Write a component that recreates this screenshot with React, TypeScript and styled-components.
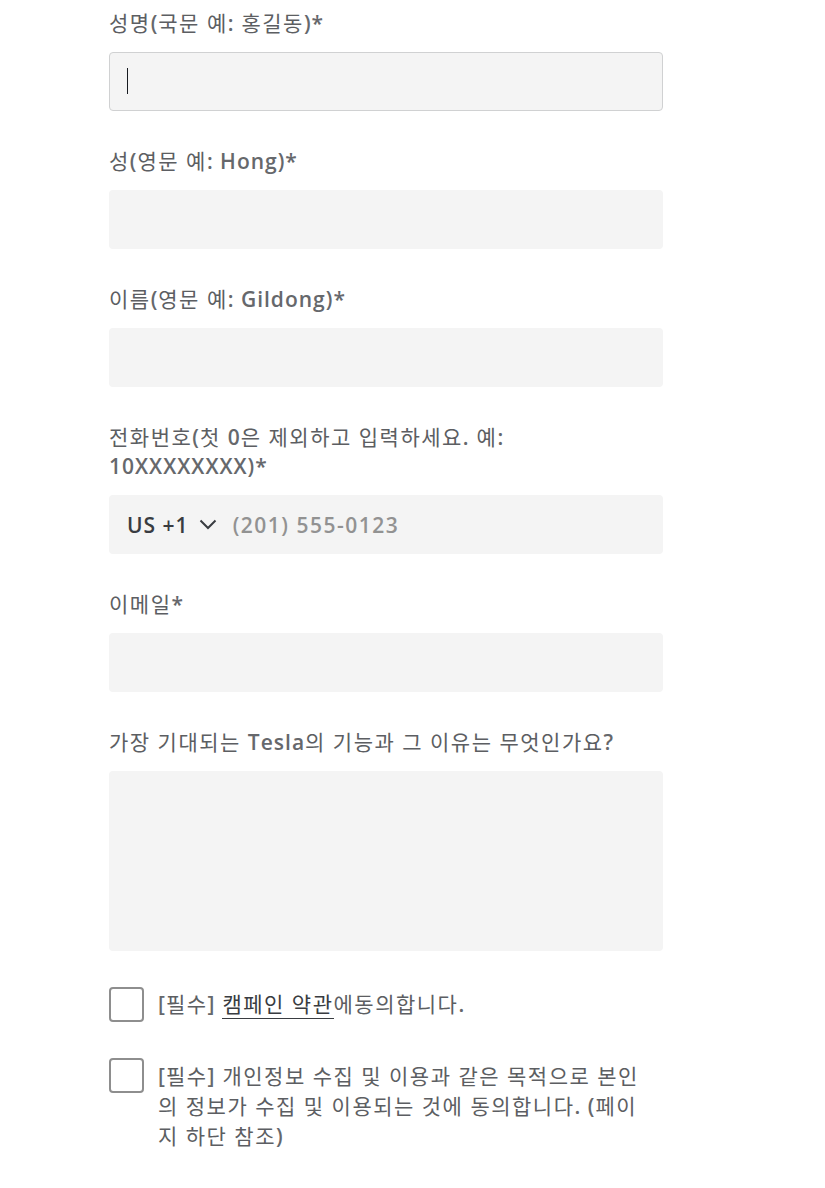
import React from 'react'
import styled, { createGlobalStyle } from 'styled-components'

const GlobalStyle = createGlobalStyle`
    body {
        margin: 0;
        background: #ffffff;
        font-family: 'Open Sans', 'Noto Sans CJK KR', sans-serif;
        color: #5c5e62;
    }
`

const Form = styled.form`
    width: 554px;
    margin-left: 109px;
    padding-top: 9px;
    display: flex;
    flex-direction: column;
`

const Field = styled.div`
    display: flex;
    flex-direction: column;
    margin-bottom: 36px;
`

const Label = styled.label`
    font-size: 21px;
    line-height: 29px;
    letter-spacing: 1.5px;
    color: #5c5e62;
    margin-bottom: 14px;
`

const Lat = styled.span`
    font-weight: 600;
    letter-spacing: 1px;
    color: #66686c;
`

const InputWrap = styled.div`
    position: relative;
`

const Input = styled.input<{ $focused?: boolean }>`
    box-sizing: border-box;
    width: 100%;
    height: 59px;
    border: 1px solid ${p => (p.$focused ? '#d0d1d2' : 'transparent')};
    border-radius: 4px;
    background: #f4f4f4;
    padding: 0 18px;
    font-family: inherit;
    font-size: 20px;
    color: #171a20;
    outline: none;
`

const Caret = styled.span`
    position: absolute;
    left: 18px;
    top: 16px;
    width: 1px;
    height: 26px;
    background: #171a20;
`

const PhoneBox = styled.div`
    box-sizing: border-box;
    height: 59px;
    border-radius: 4px;
    background: #f4f4f4;
    display: flex;
    align-items: center;
    padding: 0 18px;
    gap: 16px;
`

const CountrySelect = styled.div`
    display: flex;
    align-items: center;
    gap: 10px;
    font-size: 21px;
    font-weight: 600;
    letter-spacing: 1px;
    color: #393c41;
    white-space: nowrap;
`

const PhoneInput = styled.input`
    flex: 1;
    border: none;
    background: transparent;
    font-family: inherit;
    font-size: 21px;
    letter-spacing: 1.5px;
    color: #171a20;
    outline: none;
    padding: 0;
    &::placeholder {
        color: #929292;
        font-weight: 600;
    }
`

const TextArea = styled.textarea`
    box-sizing: border-box;
    width: 100%;
    height: 180px;
    border: none;
    border-radius: 4px;
    background: #f4f4f4;
    resize: none;
    outline: none;
    display: block;
`

const Agree = styled.label`
    display: flex;
    align-items: flex-start;
    gap: 14px;
    margin-bottom: 36px;
`

const Box = styled.span`
    box-sizing: border-box;
    flex: 0 0 35px;
    width: 35px;
    height: 35px;
    border: 2px solid #8e8e8e;
    border-radius: 4px;
    background: #fff;
`

const AgreeText = styled.span<{ $top?: number }>`
    font-size: 21px;
    line-height: 30px;
    letter-spacing: 1.5px;
    color: #5c5e62;
    padding-top: ${p => p.$top ?? 0}px;
    width: 495px;
`

const TermsLink = styled.a`
    color: #393c41;
    text-decoration: none;
    border-bottom: 1px solid #393c41;
`

const Chevron = () => (
    <svg width="18" height="11" viewBox="0 0 18 11" fill="none">
        <path d="M1.5 1.5 L9 9 L16.5 1.5" stroke="#393c41" strokeWidth="2" />
    </svg>
)

const App = () => {
    return (
        <>
            <GlobalStyle />
            <Form>
                <Field>
                    <Label>
                        성명<Lat>(</Lat>국문 예<Lat>:</Lat> 홍길동<Lat>)*</Lat>
                    </Label>
                    <InputWrap>
                        <Input $focused />
                        <Caret />
                    </InputWrap>
                </Field>
                <Field>
                    <Label>
                        성<Lat>(</Lat>영문 예<Lat>: Hong)*</Lat>
                    </Label>
                    <Input />
                </Field>
                <Field>
                    <Label>
                        이름<Lat>(</Lat>영문 예<Lat>: Gildong)*</Lat>
                    </Label>
                    <Input />
                </Field>
                <Field>
                    <Label>
                        전화번호<Lat>(</Lat>첫 <Lat>0</Lat>은 제외하고 입력하세요<Lat>.</Lat> 예<Lat>: 10XXXXXXXX)*</Lat>
                    </Label>
                    <PhoneBox>
                        <CountrySelect>
                            US +1 <Chevron />
                        </CountrySelect>
                        <PhoneInput placeholder="(201) 555-0123" />
                    </PhoneBox>
                </Field>
                <Field>
                    <Label>
                        이메일<Lat>*</Lat>
                    </Label>
                    <Input />
                </Field>
                <Field>
                    <Label>
                        가장 기대되는 <Lat>Tesla</Lat>의 기능과 그 이유는 무엇인가요<Lat>?</Lat>
                    </Label>
                    <TextArea />
                </Field>
                <Agree>
                    <Box />
                    <AgreeText $top={2}>
                        <Lat>[</Lat>필수<Lat>]</Lat> <TermsLink>캠페인 약관</TermsLink>에동의합니다<Lat>.</Lat>
                    </AgreeText>
                </Agree>
                <Agree>
                    <Box />
                    <AgreeText $top={3}>
                        <Lat>[</Lat>필수<Lat>]</Lat> 개인정보 수집 및 이용과 같은 목적으로 본인의 정보가 수집 및 이용되는 것에 동의합니다<Lat>. (</Lat>페이지 하단 참조<Lat>)</Lat>
                    </AgreeText>
                </Agree>
            </Form>
        </>
    )
}

export default App
